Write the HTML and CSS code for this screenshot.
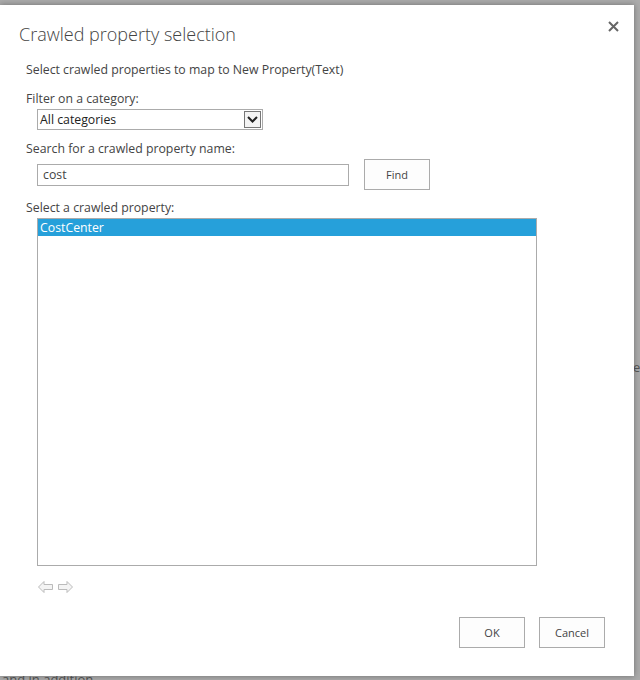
FILE: index.html
```html
<!DOCTYPE html>
<html lang="en">
<head>
    <meta charset="UTF-8">
    <title>Crawled property selection</title>
    <link rel="stylesheet" href="styles.css">
</head>
<body>
    <div class="page-behind">
        <span class="behind-right">e</span>
        <span class="behind-bottom">and in addition</span>
    </div>

    <div class="dialog">
        <div class="dialog-title">
            <h1>Crawled property selection</h1>
            <a href="#" class="close" title="Close">
                <svg width="11" height="11" viewBox="0 0 11 11"><path d="M1 1L10 10M10 1L1 10" stroke="#666" stroke-width="2"/></svg>
            </a>
        </div>
        <div class="dialog-body">
            <p class="intro">Select crawled properties to map to New Property(Text)</p>

            <label class="field-label">Filter on a category:</label>
            <div class="select-box">
                <span class="select-value">All categories</span>
                <span class="select-arrow">
                    <svg width="11" height="7" viewBox="0 0 11 7"><path d="M1 1L5.5 5.5L10 1" fill="none" stroke="#222" stroke-width="2"/></svg>
                </span>
            </div>

            <label class="field-label search-label">Search for a crawled property name:</label>
            <div class="search-row">
                <input type="text" class="search-input" value="cost">
                <button class="btn">Find</button>
            </div>

            <label class="field-label list-label">Select a crawled property:</label>
            <div class="listbox">
                <div class="list-item selected">CostCenter</div>
            </div>

            <div class="pager">
                <svg width="15" height="12" viewBox="0 0 15 12"><path d="M0.5 6L6 0.5V3.5H14.5V8.5H6V11.5Z" fill="#f4f4f4" stroke="#bbb"/></svg>
                <svg width="15" height="12" viewBox="0 0 15 12"><path d="M14.5 6L9 0.5V3.5H0.5V8.5H9V11.5Z" fill="#f4f4f4" stroke="#bbb"/></svg>
            </div>

            <div class="actions">
                <button class="btn">OK</button>
                <button class="btn">Cancel</button>
            </div>
        </div>
    </div>
</body>
</html>
```

FILE: styles.css
```css
body, html {
    margin: 0;
    padding: 0;
    width: 640px;
    height: 680px;
    overflow: hidden;
    font-family: "Open Sans", "Noto Sans", sans-serif;
    color: #444;
}
.page-behind {
    position: relative;
    width: 640px;
    height: 680px;
    background: #ababab;
    color: #555;
    font-size: 13px;
}
.behind-right {
    position: absolute;
    left: 633px;
    top: 358px;
}
.behind-bottom {
    position: absolute;
    left: 2px;
    top: 670px;
}
.dialog {
    position: absolute;
    left: 0;
    top: 5px;
    width: 634px;
    height: 671px;
    background: #fff;
    box-shadow: 0 0 6px rgba(0, 0, 0, 0.35);
    box-sizing: border-box;
}
.dialog-title {
    display: flex;
    justify-content: space-between;
    align-items: flex-start;
    padding: 15px 15px 0 19px;
}
h1 {
    margin: 0;
    font-size: 18px;
    font-weight: 300;
    color: #444;
    line-height: 28px;
}
.close {
    margin-top: 1px;
    line-height: 0;
}
.dialog-body {
    padding: 0 0 0 26px;
    font-size: 12.3px;
}
.intro {
    margin: 13px 0 0;
    line-height: 18px;
}
.field-label {
    display: block;
    margin-top: 11px;
    line-height: 17px;
}
.select-box {
    display: flex;
    align-items: center;
    margin: 2px 0 0 11px;
    width: 226px;
    height: 21px;
    border: 1px solid #ababab;
    box-sizing: border-box;
}
.select-value {
    flex: 1;
    padding-left: 2px;
    color: #222;
}
.select-arrow {
    display: flex;
    align-items: center;
    justify-content: center;
    width: 17px;
    height: 17px;
    margin-right: 1px;
    border: 1px solid #777;
    box-sizing: border-box;
    background: #f4f4f4;
}
.search-label {
    margin-top: 10px;
}
.search-row {
    display: flex;
    align-items: center;
    gap: 15px;
    margin: 2px 0 0 11px;
}
.search-input {
    width: 312px;
    height: 22px;
    border: 1px solid #ababab;
    box-sizing: border-box;
    padding: 0 5px;
    font-family: inherit;
    font-size: 12.3px;
    color: #444;
}
.btn {
    width: 66px;
    height: 31px;
    border: 1px solid #ababab;
    background: #fdfdfd;
    font-family: inherit;
    font-size: 11px;
    color: #444;
    padding: 0;
}
.list-label {
    margin-top: 9px;
}
.listbox {
    margin: 2px 0 0 11px;
    width: 500px;
    height: 348px;
    border: 1px solid #ababab;
    box-sizing: border-box;
}
.list-item {
    height: 17px;
    line-height: 17px;
    padding-left: 2px;
}
.list-item.selected {
    background: #26a0da;
    color: #fff;
}
.pager {
    display: flex;
    gap: 5px;
    margin: 15px 0 0 12px;
}
.actions {
    display: flex;
    justify-content: flex-end;
    gap: 14px;
    margin: 24px 29px 0 0;
}
```
